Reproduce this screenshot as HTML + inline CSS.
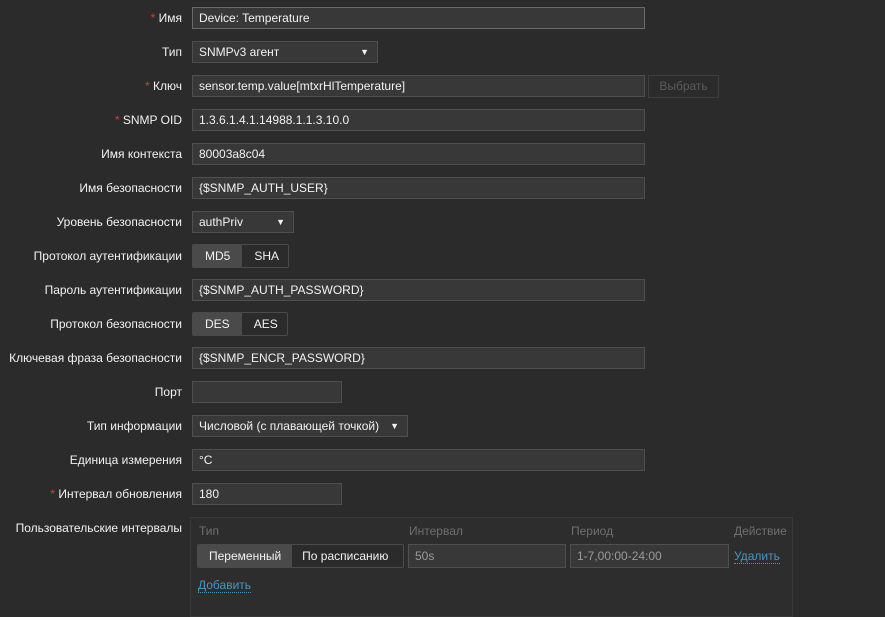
<!DOCTYPE html>
<html><head><meta charset="utf-8"><style>
body{margin:0;width:885px;height:601px;background:#2b2b2b;font-family:"Liberation Sans",Arial,sans-serif;font-size:12px;color:#f2f2f2;overflow:hidden;position:relative}
.l{position:absolute;right:703px;text-align:right;white-space:nowrap;line-height:14px}
.r{color:#e33734}
.i{position:absolute;left:192px;height:22px;box-sizing:border-box;background:#383838;border:1px solid #4f4f4f;line-height:20px;padding-left:6px;white-space:nowrap}
.sel::after{content:"▼";position:absolute;right:8px;font-size:9px}
.seg{position:absolute;left:192px;height:24px;box-sizing:border-box;border:1px solid #4a4a4a;border-radius:2px;display:flex;background:#2b2b2b;overflow:hidden}
.seg span{display:block;line-height:22px;padding:0 12px}
.seg .a{background:#4a4a4a}
</style></head><body>
<div class="l" style="top:11px"><span class="r">*</span> Имя</div>
<div class="i" style="top:7px;width:453px;border-color:#6a6a6a">Device: Temperature</div>
<div class="l" style="top:45px">Тип</div>
<div class="i sel" style="top:41px;width:186px">SNMPv3 агент</div>
<div class="l" style="top:79px"><span class="r">*</span> Ключ</div>
<div class="i" style="top:75px;width:453px">sensor.temp.value[mtxrHlTemperature]</div>
<div style="position:absolute;left:648px;top:75px;width:71px;height:23px;box-sizing:border-box;border:1px solid #3e3e3e;color:#5c5c5c;text-align:center;line-height:21px">Выбрать</div>
<div class="l" style="top:113px"><span class="r">*</span> SNMP OID</div>
<div class="i" style="top:109px;width:453px">1.3.6.1.4.1.14988.1.1.3.10.0</div>
<div class="l" style="top:147px">Имя контекста</div>
<div class="i" style="top:143px;width:453px">80003a8c04</div>
<div class="l" style="top:181px">Имя безопасности</div>
<div class="i" style="top:177px;width:453px">{$SNMP_AUTH_USER}</div>
<div class="l" style="top:215px">Уровень безопасности</div>
<div class="i sel" style="top:211px;width:102px">authPriv</div>
<div class="l" style="top:249px">Протокол аутентификации</div>
<div class="seg" style="top:244px;width:97px"><span class="a">MD5</span><span>SHA</span></div>
<div class="l" style="top:283px">Пароль аутентификации</div>
<div class="i" style="top:279px;width:453px">{$SNMP_AUTH_PASSWORD}</div>
<div class="l" style="top:317px">Протокол безопасности</div>
<div class="seg" style="top:312px;width:96px"><span class="a">DES</span><span>AES</span></div>
<div class="l" style="top:351px">Ключевая фраза безопасности</div>
<div class="i" style="top:347px;width:453px">{$SNMP_ENCR_PASSWORD}</div>
<div class="l" style="top:385px">Порт</div>
<div class="i" style="top:381px;width:150px"></div>
<div class="l" style="top:419px">Тип информации</div>
<div class="i sel" style="top:415px;width:216px">Числовой (с плавающей точкой)</div>
<div class="l" style="top:453px">Единица измерения</div>
<div class="i" style="top:449px;width:453px">°C</div>
<div class="l" style="top:487px"><span class="r">*</span> Интервал обновления</div>
<div class="i" style="top:483px;width:150px">180</div>
<div class="l" style="top:521px">Пользовательские интервалы</div>
<div style="position:absolute;left:190px;top:517px;width:603px;height:100px;box-sizing:border-box;border:1px solid #383838;background:#2d2d2d"></div>
<div style="position:absolute;top:524px;left:199px;color:#6f6f6f">Тип</div>
<div style="position:absolute;top:524px;left:409px;color:#6f6f6f">Интервал</div>
<div style="position:absolute;top:524px;left:571px;color:#6f6f6f">Период</div>
<div style="position:absolute;top:524px;left:734px;color:#6f6f6f">Действие</div>
<div class="seg" style="left:197px;top:544px;width:207px"><span class="a" style="padding:0 11px">Переменный</span><span style="padding:0 10px">По расписанию</span></div>
<div class="i" style="left:408px;top:544px;width:158px;height:24px;line-height:22px;color:#9a9a9a">50s</div>
<div class="i" style="left:570px;top:544px;width:159px;height:24px;line-height:22px;color:#9a9a9a">1-7,00:00-24:00</div>
<div style="position:absolute;left:734px;top:549px;color:#4796c4;border-bottom:1px dotted #4796c4">Удалить</div>
<div style="position:absolute;left:198px;top:578px;color:#4796c4;border-bottom:1px dotted #4796c4">Добавить</div>
</body></html>
